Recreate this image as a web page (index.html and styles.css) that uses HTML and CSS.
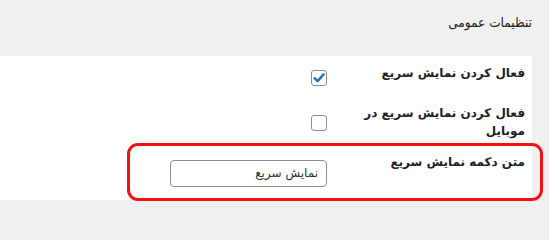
FILE: index.html
```html
<!DOCTYPE html>
<html lang="fa" dir="rtl">
<head>
<meta charset="utf-8">
<title>تنظیمات عمومی</title>
<link rel="stylesheet" href="styles.css">
</head>
<body>
<h2 class="section-title">تنظیمات عمومی</h2>
<div class="panel">
  <div class="row row-1">
    <div class="label">فعال کردن نمایش سریع</div>
    <div class="control"><span class="checkbox checked"><svg viewBox="0 0 16 16" width="16" height="16"><path d="M3.6 8.2 L6.6 11.1 L12.6 4.4" fill="none" stroke="#2271b1" stroke-width="2.4" stroke-linecap="round" stroke-linejoin="round"/></svg></span></div>
  </div>
  <div class="row row-2">
    <div class="label">فعال کردن نمایش سریع در موبایل</div>
    <div class="control"><span class="checkbox"></span></div>
  </div>
  <div class="row row-3">
    <div class="label">متن دکمه نمایش سریع</div>
    <div class="control"><div class="text-input">نمایش سریع</div></div>
    <div class="highlight"></div>
  </div>
</div>
</body>
</html>
```

FILE: styles.css
```css
html, body {
  margin: 0;
  padding: 0;
  background: #f0f0f1;
  font-family: "DejaVu Sans", "Noto Sans", sans-serif;
  color: #1d2327;
  overflow: hidden;
}
body {
  width: 549px;
  height: 218px;
}
.section-title {
  margin: 0;
  height: 56px;
  box-sizing: border-box;
  padding: 12px 17px 0 0;
  font-family: "DejaVu Sans Condensed", "DejaVu Sans", sans-serif;
  font-size: 13.5px;
  line-height: 20px;
  font-weight: normal;
  color: #1d2327;
}
.panel {
  background: #fff;
  margin: 0 17px 0 0;
  padding-right: 7px;
}
.row {
  display: flex;
  align-items: flex-start;
  position: relative;
}
.row-1 { height: 40px; }
.row-2 { height: 49px; }
.row-3 { height: 55px; }
.label {
  width: 170px;
  padding: 8px 0 0 18px;
  font-size: 12px;
  font-weight: bold;
  line-height: 18px;
  color: #1d2327;
}
.control {
  padding-right: 10px;
}
.row-1 .control { padding-top: 14px; }
.row-2 .control { padding-top: 19px; }
.row-3 .control { padding-top: 15px; }
.checkbox {
  display: block;
  width: 14px;
  height: 14px;
  border: 1px solid #8c8f94;
  border-radius: 3px;
  background: #fff;
  position: relative;
}
.checkbox svg {
  position: absolute;
  top: -1px;
  right: -1px;
}
.text-input {
  width: 157px;
  height: 27px;
  box-sizing: border-box;
  border: 1px solid #8c8f94;
  border-radius: 4px;
  padding: 0 8px;
  font-size: 12px;
  line-height: 25px;
  color: #2c3338;
  background: #fff;
}
.highlight {
  position: absolute;
  top: -2px;
  bottom: -1px;
  left: 127px;
  right: -18px;
  border: 3px solid #f21010;
  border-radius: 11px;
  pointer-events: none;
}
```
